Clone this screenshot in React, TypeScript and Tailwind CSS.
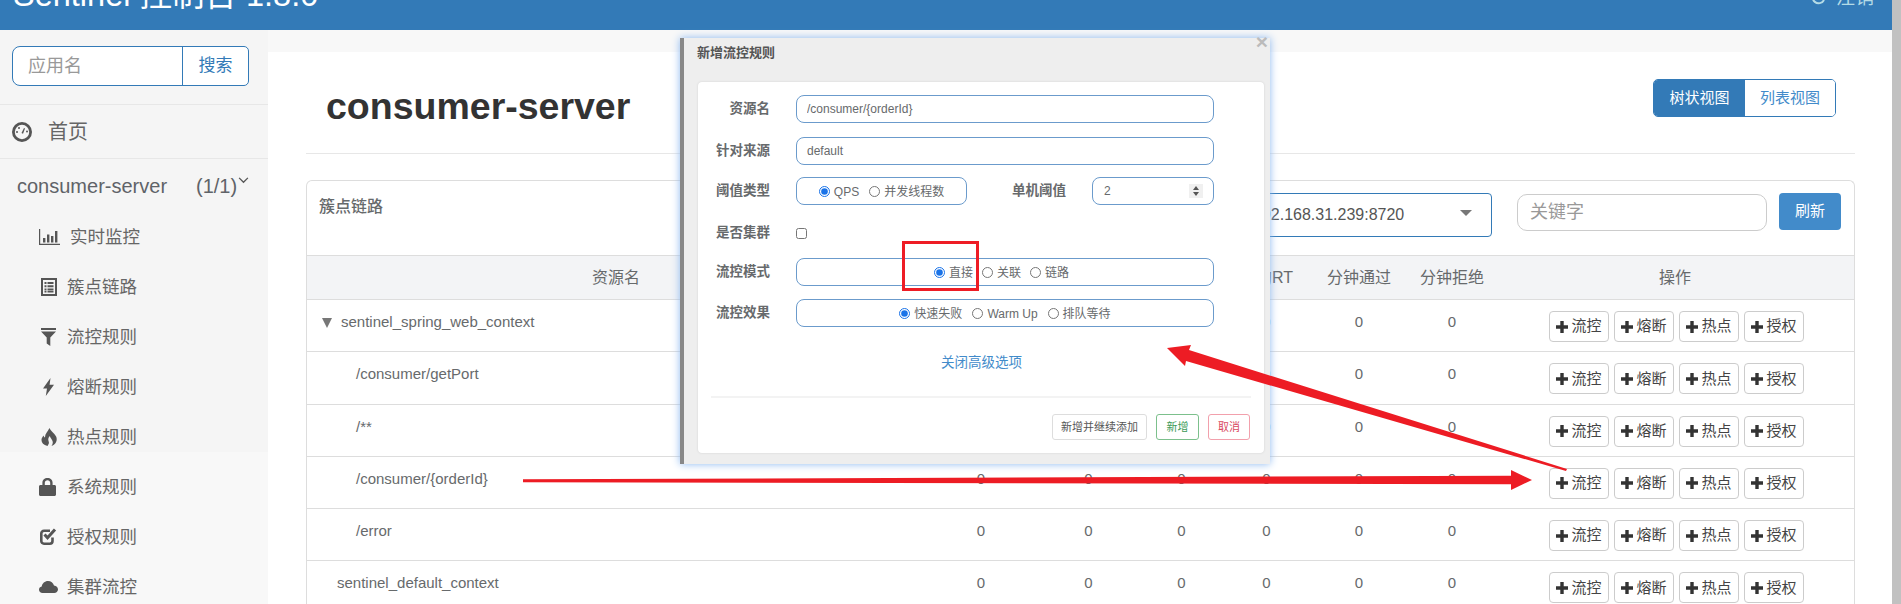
const font = "[font-family:'Liberation_Sans','Noto_Sans_CJK_SC',sans-serif]";

const rows = [
  { name: 'sentinel_spring_web_context', indent: 'pl-[15px] gap-[9px]', arrow: true },
  { name: '/consumer/getPort', indent: 'pl-[49px]', arrow: false },
  { name: '/**', indent: 'pl-[49px]', arrow: false },
  { name: '/consumer/{orderId}', indent: 'pl-[49px]', arrow: false },
  { name: '/error', indent: 'pl-[49px]', arrow: false },
  { name: 'sentinel_default_context', indent: 'pl-[30px]', arrow: false },
];

const columns = ['通过QPS', '拒绝QPS', '并发数', '平均RT', '分钟通过', '分钟拒绝'];
const actions = ['流控', '熔断', '热点', '授权'];

const gridCols = 'grid grid-cols-[618px_112px_103px_83px_87px_98px_88px_1fr]';

function BarIcon() {
  return (
    <svg viewBox="0 0 21 16" className="w-[21px] h-[16px] fill-[#555]">
      <path d="M0 0h1.2v14.8H21V16H0z" />
      <path d="M4 9h2.4v4.6H4zM8 5.5h2.4v8.1H8zM12 7h2.4v6.6H12zM16 2h2.4v11.6H16z" />
    </svg>
  );
}

function ListIcon() {
  return (
    <svg viewBox="0 0 16 18" className="w-[16px] h-[18px] fill-[#555]">
      <path fillRule="evenodd" d="M0 0h16v18H0zM2 2v14h12V2z" />
      <path d="M3.5 4h2v2h-2zM6.5 4h6v2h-6zM3.5 7.2h2v2h-2zM6.5 7.2h6v2h-6zM3.5 10.4h2v2h-2zM6.5 10.4h6v2h-6zM3.5 13h2v1.6h-2zM6.5 13h6v1.6h-6z" />
    </svg>
  );
}

function FilterIcon() {
  return (
    <svg viewBox="0 0 15 18" className="w-[15px] h-[18px] fill-[#555]">
      <path d="M0 0h15v2H0zM0 3.5h15L9.3 9.5V18l-3.6-2.5v-6z" />
    </svg>
  );
}

function FlashIcon() {
  return (
    <svg viewBox="0 0 11 18" className="w-[11px] h-[18px] fill-[#555]">
      <path d="M7.5 0L0 10.5h4L2.8 18 11 6.8H6.6z" />
    </svg>
  );
}

function FireIcon() {
  return (
    <svg viewBox="0 0 16 18" className="w-[16px] h-[18px] fill-[#555]">
      <path d="M8.5 0c1 3 4.6 4.800 6.600 8.600 1.800 3.800-.6 8.400-4.600 9.400 1.600-2 1.800-4.600.2-6.600-.8-1-1.600-2.200-1.800-3.400-1 1-1.800 2.400-1.600 4 .2 1.200.8 2 .6 3.200-.2.8-.8 1.600-1.400 2.800C2 17 0 14 .6 11c.3-1.400 1.200-2.600 2-3.600.2 1 .6 1.800 1.400 2.200C3.800 6 6.600 3.600 8.500 0z" />
    </svg>
  );
}

function LockIcon() {
  return (
    <svg viewBox="0 0 17 18" className="w-[17px] h-[18px] fill-[#555]">
      <path fillRule="evenodd" d="M1.500 7H3.400V4.800C3.400 2 5.600 0 8.500 0s5.100 2 5.100 4.800V7h1.900c.8 0 1.500.7 1.500 1.500v8c0 .8-.7 1.500-1.500 1.500h-14C.7 18 0 17.300 0 16.500v-8C0 7.700.7 7 1.500 7zM5.800 7h5.400V4.800c0-1.500-1.200-2.500-2.700-2.500s-2.700 1-2.700 2.500z" />
    </svg>
  );
}

function CheckIcon() {
  return (
    <svg viewBox="0 0 18 18" className="w-[18px] h-[18px]">
      <path d="M13.500 9.500v3.500c0 1.600-1.100 2.700-2.700 2.700H5c-1.600 0-2.700-1.100-2.700-2.700V5.500c0-1.600 1.100-2.700 2.700-2.700h6" fill="none" stroke="#555" strokeWidth="2.600" />
      <path d="M5.500 6.500l3 3.200L16 1.500" fill="none" stroke="#555" strokeWidth="3" />
    </svg>
  );
}

function CloudIcon() {
  return (
    <svg viewBox="0 0 19 12" className="w-[19px] h-[12px] fill-[#555]">
      <path d="M3.500 12C1.500 12 0 10.600 0 8.800c0-1.600 1.100-2.900 2.700-3.200C3.200 2.400 5.800 0 9 0c2.900 0 5.300 1.900 6 4.500 2.300.2 4 2 4 4 0 1.900-1.700 3.500-3.700 3.500z" />
    </svg>
  );
}

function GaugeIcon() {
  return (
    <svg viewBox="0 0 20 20" className="w-[20px] h-[20px]">
      <circle cx="10" cy="10" r="8.600" fill="none" stroke="#555" strokeWidth="2.800" />
      <path d="M9.500 11l2.500-5 1 .5-2 5.200z" fill="#555" />
      <circle cx="5" cy="10" r="1" fill="#555" />
      <circle cx="7" cy="6" r="1" fill="#555" />
      <circle cx="15" cy="9.500" r="1" fill="#555" />
    </svg>
  );
}

function PlusIcon() {
  return (
    <svg viewBox="0 0 12 12" className="w-[12px] h-[12px] fill-[#333]">
      <path d="M4.300 0h3.400v4.300H12v3.400H7.700V12H4.300V7.700H0V4.300h4.300z" />
    </svg>
  );
}

const navItems = [
  { label: '实时监控', icon: <BarIcon />, offset: 'pl-[39px] gap-[10px]' },
  { label: '簇点链路', icon: <ListIcon />, offset: 'pl-[41px] gap-[10px]' },
  { label: '流控规则', icon: <FilterIcon />, offset: 'pl-[41px] gap-[11px]' },
  { label: '熔断规则', icon: <FlashIcon />, offset: 'pl-[43px] gap-[13px]' },
  { label: '热点规则', icon: <FireIcon />, offset: 'pl-[41px] gap-[10px]' },
  { label: '系统规则', icon: <LockIcon />, offset: 'pl-[39px] gap-[11px]' },
  { label: '授权规则', icon: <CheckIcon />, offset: 'pl-[39px] gap-[10px]' },
  { label: '集群流控', icon: <CloudIcon />, offset: 'pl-[39px] gap-[9px]' },
];

function Sidebar() {
  return (
    <aside className="w-[268px] shrink-0 text-[#666] h-[574px] overflow-hidden bg-[#f8f8f8]">
      <div className="bg-[#f5f5f5] h-[422px]">
        <div className="h-[75px] pt-[16px] pl-[12px] border-b border-[#e7e7e7]">
          <div className="flex w-[237px] h-[40px] bg-white border border-[#337ab7] rounded-[8px] rounded-r-[5px] overflow-hidden">
            <input placeholder="应用名" className="w-[170px] pl-[15px] text-[18px] outline-none border-r border-[#337ab7] placeholder:text-[#999]" />
            <button className="flex-1 text-[17px] text-[#337ab7]">搜索</button>
          </div>
        </div>
        <div className="h-[54px] flex items-center pl-[12px] gap-[16px] text-[20px] border-b border-[#e7e7e7]">
          <GaugeIcon />
          <span>首页</span>
        </div>
        <div className="h-[53px] flex items-center pl-[17px] text-[20px] text-[#5f6368]">
          <span className="w-[179px]">consumer-server</span>
          <span>(1/1)</span>
          <svg viewBox="0 0 12 8" className="w-[11px] h-[7px] mb-[10px] ml-[1px]">
            <path d="M1 1l5 5 5-5" fill="none" stroke="#555" strokeWidth="1.500" />
          </svg>
        </div>
      </div>
      <div className="-mt-[240px]">
        {navItems.map((item) => (
          <div key={item.label} className={`flex items-center h-[50px] text-[17.500px] ${item.offset}`}>
            {item.icon}
            <span>{item.label}</span>
          </div>
        ))}
      </div>
    </aside>
  );
}

function ActionButton({ label }: { label: string }) {
  return (
    <button className="flex items-center justify-center gap-[3px] w-[60px] h-[31px] bg-white border border-[#ccc] rounded-[4px] text-[15px] text-[#444]">
      <PlusIcon />
      {label}
    </button>
  );
}

function ResourcePanel() {
  return (
    <div className="border-x border-t border-[#ddd] rounded-t-[6px] text-[#676a6c]">
      <div className="h-[75px] border-b border-[#ddd] flex pr-[13px] pl-[12px]">
        <div className="flex-1 pt-[15px] text-[16px] font-medium leading-[22px]">簇点链路</div>
        <div className="w-[292px] h-[44px] mt-[12px] mr-[25px] border border-[#337ab7] rounded-[4px] flex items-center justify-between pl-[52px] pr-[19px] text-[16px] text-[#555]">
          <span>192.168.31.239:8720</span>
          <span className="w-0 h-0 border-x-[6px] border-x-transparent border-t-[6px] border-t-[#777] -mt-[4px]" />
        </div>
        <input placeholder="关键字" className="w-[250px] h-[37px] mt-[13px] mr-[12px] pl-[12px] bg-white border border-[#ccc] rounded-[10px] text-[18px] outline-none placeholder:text-[#999]" />
        <button className="w-[62px] h-[37px] mt-[12px] bg-[#428bca] rounded-[4px] text-white text-[15px]">刷新</button>
      </div>
      <div className={`${gridCols} h-[44px] items-center bg-[#f3f4f6] border-b border-[#ddd] text-[16px] text-center`}>
        <div>资源名</div>
        {columns.map((c) => (
          <div key={c}>{c}</div>
        ))}
        <div>操作</div>
      </div>
      {rows.map((row) => (
        <div key={row.name} className={`${gridCols} h-[52.300px] border-b border-[#ddd] text-[15px]`}>
          <div className={`flex items-start pt-[11px] leading-[22px] ${row.indent}`}>
            {row.arrow && <span className="mt-[7px] w-0 h-0 border-x-[5px] border-x-transparent border-t-[10px] border-t-[#777]" />}
            <span>{row.name}</span>
          </div>
          {columns.map((c) => (
            <div key={c} className="pt-[11px] leading-[22px] text-center">0</div>
          ))}
          <div className="flex gap-[5px] pl-[53px] pt-[11px]">
            {actions.map((a) => (
              <ActionButton key={a} label={a} />
            ))}
          </div>
        </div>
      ))}
    </div>
  );
}

function FormRow({ label, className, children }: { label: string; className: string; children: React.ReactNode }) {
  return (
    <div className={`flex items-center h-[28px] ${className}`}>
      <label className="w-[72px] shrink-0 text-right text-[13.500px] font-semibold text-[#676a6c]">{label}</label>
      <div className="ml-[26px] flex items-center">{children}</div>
    </div>
  );
}

const boxClass = 'h-[28px] border border-[#6b9bcc] rounded-[8px] text-[12px] text-[#676a6c] bg-white';

function Radio({ name, label, checked }: { name: string; label: string; checked?: boolean }) {
  return (
    <label className="flex items-center gap-[4px]">
      <input type="radio" name={name} defaultChecked={checked} className="w-[11px] h-[11px] m-0 accent-[#1a73e8]" />
      <span className="mt-[2px]">{label}</span>
    </label>
  );
}

function RuleModal() {
  return (
    <div className="absolute left-[680px] top-[38px] w-[590px] h-[426px] bg-[#eee] border-l-[4px] border-[#888] shadow-[0_0_8px_#8bb8f0]">
      <div className="relative h-[44px] pl-[13px] pt-[6px] text-[13px] font-semibold leading-[18px] text-[#555]">
        新增流控规则
        <span className="absolute right-[2px] top-[-4px] text-[21px] leading-[16px] font-bold text-[#bbb]">×</span>
      </div>
      <div className="ml-[14px] w-[566px] h-[371px] bg-white rounded-[4px] shadow-[0_0_2px_#ccc] pt-[13px]">
        <FormRow label="资源名" className="mb-[14px]">
          <input readOnly defaultValue="/consumer/{orderId}" className={`${boxClass} w-[418px] pl-[10px] outline-none`} />
        </FormRow>
        <FormRow label="针对来源" className="mb-[12px]">
          <input readOnly defaultValue="default" className={`${boxClass} w-[418px] pl-[10px] outline-none`} />
        </FormRow>
        <FormRow label="阈值类型" className="mb-[14px]">
          <div className={`${boxClass} w-[171px] flex items-center justify-center gap-[10px]`}>
            <Radio name="grade" label="QPS" checked />
            <Radio name="grade" label="并发线程数" />
          </div>
          <span className="ml-[45px] w-[54px] shrink-0 text-[13.500px] font-semibold text-[#676a6c]">单机阈值</span>
          <div className={`${boxClass} ml-[26px] w-[122px] flex items-center justify-between pl-[11px] pr-[10px]`}>
            <span>2</span>
            <span className="w-[14px] h-[14px] bg-[#f0f0f0] flex flex-col items-center justify-center gap-[2px]">
              <span className="w-0 h-0 border-x-[3px] border-x-transparent border-b-[4px] border-b-[#555]" />
              <span className="w-0 h-0 border-x-[3px] border-x-transparent border-t-[4px] border-t-[#555]" />
            </span>
          </div>
        </FormRow>
        <FormRow label="是否集群" className="mb-[11px]">
          <input type="checkbox" className="w-[11px] h-[11px] m-0" />
        </FormRow>
        <FormRow label="流控模式" className="mb-[13px]">
          <div className={`${boxClass} w-[418px] flex items-center justify-center gap-[9px] pr-[7px]`}>
            <Radio name="mode" label="直接" checked />
            <Radio name="mode" label="关联" />
            <Radio name="mode" label="链路" />
          </div>
        </FormRow>
        <FormRow label="流控效果" className="mb-[26px]">
          <div className={`${boxClass} w-[418px] flex items-center justify-center gap-[10px]`}>
            <Radio name="effect" label="快速失败" checked />
            <Radio name="effect" label="Warm Up" />
            <Radio name="effect" label="排队等待" />
          </div>
        </FormRow>
        <div className="text-center text-[13.500px] leading-[20px] text-[#428bca] pl-[1px]">关闭高级选项</div>
        <div className="mt-[23px] mx-[13px] border-t-2 border-[#f3f3f3]" />
        <div className="mt-[16px] mr-[14px] flex justify-end text-[11px]">
          <button className="w-[95px] h-[26px] border border-[#ddd] rounded-[3px] text-[#555]">新增并继续添加</button>
          <button className="ml-[9px] w-[43px] h-[26px] border border-[#7cc08c] rounded-[3px] text-[#3c9a58]">新增</button>
          <button className="ml-[9px] w-[42px] h-[26px] border border-[#f2a0ac] rounded-[3px] text-[#d9485f]">取消</button>
        </div>
      </div>
    </div>
  );
}

export default function App() {
  return (
    <div className={`relative flex w-[1901px] h-[604px] overflow-hidden bg-[#f8f8f8] ${font}`}>
      <div className="w-[1892px] shrink-0">
        <header className="h-[30px] overflow-hidden bg-[#337ab7] flex justify-between pl-[13px] pr-[18px]">
          <div className="-mt-[23px] h-[36px] leading-[36px] text-[32.500px] text-white">Sentinel 控制台 1.8.0</div>
          <div className="-mt-[16px] h-[28px] leading-[28px] text-[19px] text-[#b4dbe6] flex items-center gap-[10px]">
            <svg viewBox="0 0 16 16" className="w-[16px] h-[16px]">
              <path d="M5 2.500A6 6 0 1 0 14 10" fill="none" stroke="#b4dbe6" strokeWidth="2" />
            </svg>
            注销
          </div>
        </header>
        <div className="flex">
          <Sidebar />
          <main className="flex-1 pt-[22px] min-w-0">
            <div className="bg-white h-[552px] px-[38px] pr-[37px]">
              <div className="h-[102px] flex justify-between border-b border-[#e7e7e7] pl-[20px] pr-[19px]">
                <h1 className="mt-[34px] h-[40px] leading-[40px] text-[37.500px] font-bold text-[#333]">consumer-server</h1>
                <div className="mt-[27px] h-[38px] flex text-[15px] border border-[#337ab7] rounded-[5px] overflow-hidden">
                  <button className="w-[91px] bg-[#337ab7] text-white">树状视图</button>
                  <button className="w-[90px] bg-white text-[#428bca]">列表视图</button>
                </div>
              </div>
              <div className="mt-[26px]">
                <ResourcePanel />
              </div>
            </div>
          </main>
        </div>
      </div>
      <div className="flex-1 bg-[#c1c1c1]" />
      <RuleModal />
      {/* red marks drawn over the screenshot */}
      <div className="absolute left-[902px] top-[241px] w-[77px] h-[50px] border-[3px] border-[#ee1c25]" />
      <svg className="absolute left-0 top-0 w-[1901px] h-[604px] pointer-events-none" viewBox="0 0 1901 604">
        <polygon fill="#ed1c24" points="523,479.300 1511,475.700 1511,470 1532,480 1511,490 1511,484.300 523,482.300" />
        <polygon fill="#ed1c24" points="1167,348 1191,345 1189,350 1567,469 1566,471 1186,361 1185,366" />
      </svg>
    </div>
  );
}
